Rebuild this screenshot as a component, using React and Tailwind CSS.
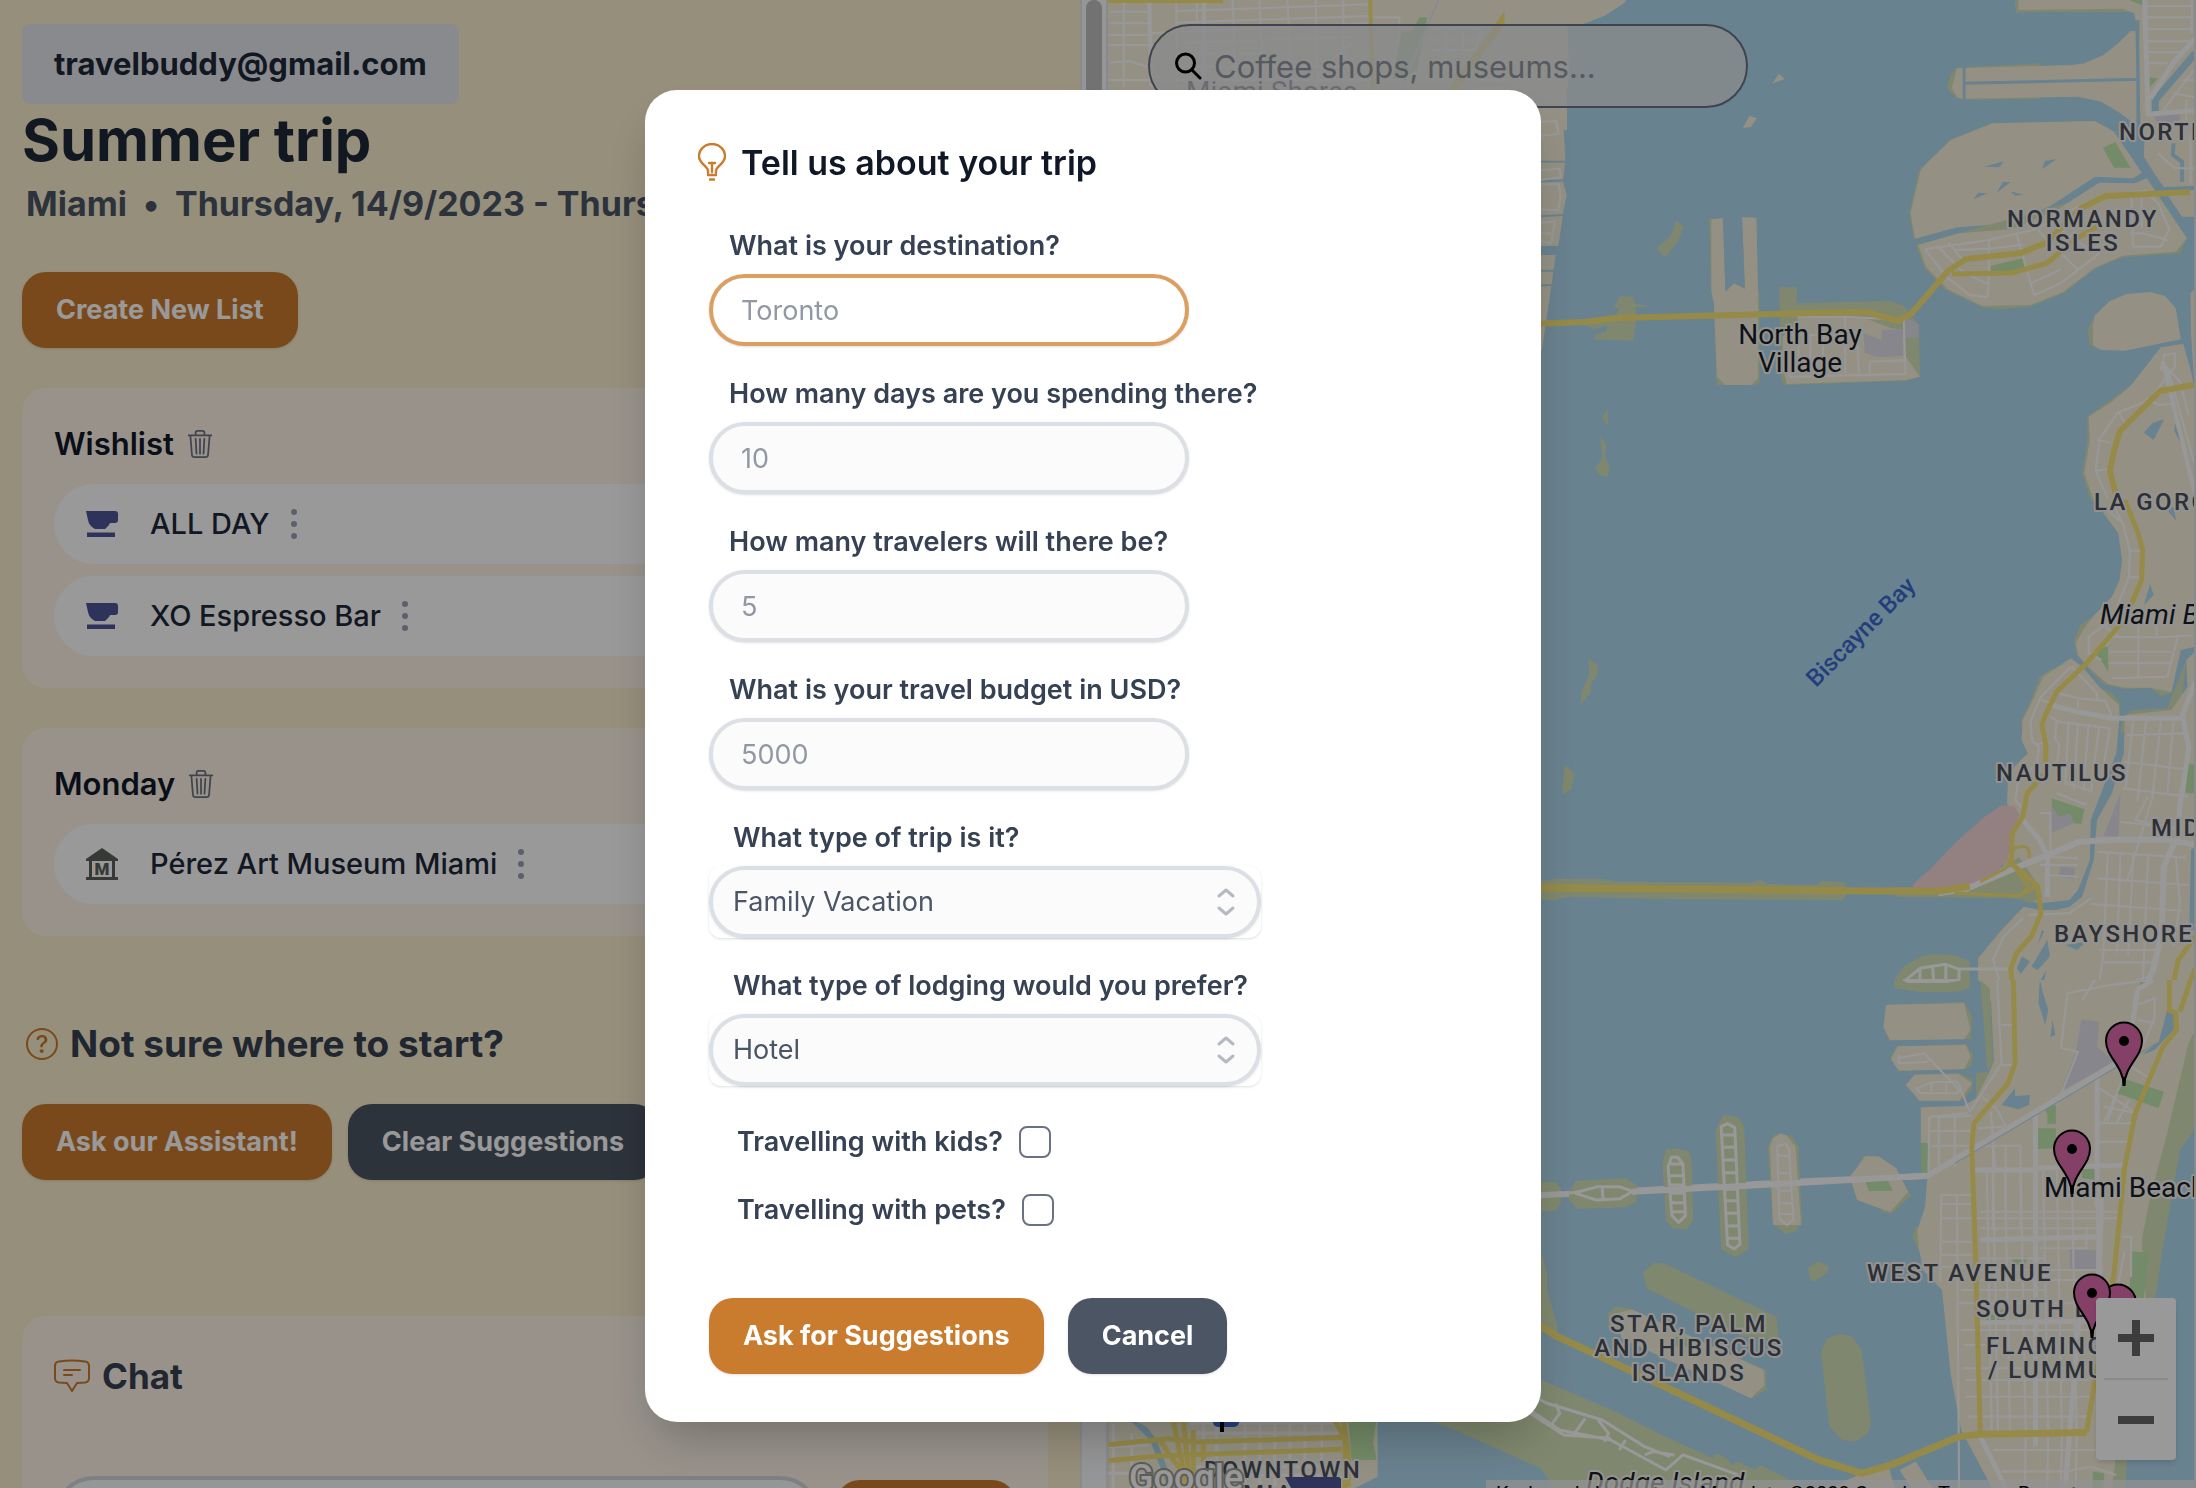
import React from "react";
import { BsTrash3, BsQuestionCircle } from "react-icons/bs";

const FONT = "font-['Inter','Liberation_Sans',sans-serif]";

function CupIcon() {
  return (
    <svg viewBox="0 0 32 28" className="h-7 w-8 shrink-0 fill-[#4b5596]" aria-hidden="true">
      <path d="M0 1h29q3 0 3 3v6q0 3-3 3h-4q-2 0-2 2l-4 4H9q-6-3-7-9z" />
      <path d="M1 22.500h28v4.500H1z" />
    </svg>
  );
}

function MuseumIcon() {
  return (
    <svg viewBox="0 0 32 32" className="h-8 w-8 shrink-0" aria-hidden="true">
      <path fill="#5d605b" d="M16 0l16 11v2H0v-2z M0 29h32v3H0z M3 13h3v16H3z M26 13h3v16h-3z" />
      <text x="16" y="26.500" textAnchor="middle" fontFamily="Roboto, sans-serif" fontWeight="900" fontSize="17" fill="#5d605b">M</text>
    </svg>
  );
}

function BulbIcon() {
  return (
    <svg viewBox="0 0 30 38" className="h-[38px] w-[30px] shrink-0" fill="none" stroke="#c97b2e" strokeWidth="2.400" strokeLinecap="round" strokeLinejoin="round" aria-hidden="true">
      <path d="M11 30v-2c0-5-9-7-9-15a13 12 0 0 1 26 0c0 8-9 10-9 15v2" />
      <path d="M12 20h6M15 20v9M11 32h8M13 36.500h4" />
    </svg>
  );
}

function ChatIcon() {
  return (
    <svg viewBox="0 0 36 34" className="h-[34px] w-9 shrink-0" fill="none" stroke="#cb7b2d" strokeWidth="2" strokeLinecap="round" strokeLinejoin="round" aria-hidden="true">
      <path d="M5 2.500Q18 .5 31 2.500q4 .5 4 4.500v12q0 4-4 4.500l-8 .5-5 8-5-8-8-.5q-4-.5-4-4.500V7q0-4 4-4.500z" />
      <path d="M10 11h16M10 16h8" />
    </svg>
  );
}

function Place({ icon, name }) {
  return (
    <li className="flex h-20 items-center rounded-full bg-white pl-8">
      {icon}
      <span className="ml-8 text-[29px] font-medium text-gray-800">{name}</span>
      <button type="button" aria-label={"Options for " + name} className="ml-5">
        <svg viewBox="0 0 8 32" className="h-8 w-2 fill-gray-400" aria-hidden="true">
          <circle cx="4" cy="4" r="3" />
          <circle cx="4" cy="16" r="3" />
          <circle cx="4" cy="28" r="3" />
        </svg>
      </button>
    </li>
  );
}

function TripList({ title, children }) {
  return (
    <section className="mt-10 rounded-3xl bg-[#fdf4e8] px-8 pt-9 pb-8">
      <div className="flex h-10 items-center gap-3">
        <h2 className="text-[31px] font-semibold text-gray-900">{title}</h2>
        <button type="button" aria-label={"Delete " + title}>
          <BsTrash3 className="size-7 text-gray-500" />
        </button>
      </div>
      <ul className="mt-5 flex flex-col gap-3">{children}</ul>
    </section>
  );
}

const BTN = "h-[76px] whitespace-nowrap rounded-3xl px-[34px] text-[27px] font-bold text-white shadow-sm";

function Planner() {
  return (
    <div className="flex h-screen overflow-hidden bg-[#faeecd]">
      <div className="min-w-0 flex-1 pt-6 pr-8 pl-[22px]">
        <div className="flex h-20 w-fit items-center rounded-lg bg-gray-200 px-8 text-[31px] font-bold text-gray-800">
          travelbuddy@gmail.com
        </div>
        <h1 className="text-[58px] leading-[72px] font-bold text-gray-800">Summer trip</h1>
        <p className="mt-1 flex gap-4 pl-1 text-[34px] leading-12 font-bold whitespace-nowrap text-gray-600">
          <span>Miami</span>
          <span>•</span>
          <span>Thursday, 14/9/2023 - Thursday, 21/9/2023</span>
        </p>
        <button type="button" className={BTN + " mt-11 block bg-[#cb7b2d]"}>Create New List</button>
        <TripList title="Wishlist">
          <Place icon={<CupIcon />} name="ALL DAY" />
          <Place icon={<CupIcon />} name="XO Espresso Bar" />
        </TripList>
        <TripList title="Monday">
          <Place icon={<MuseumIcon />} name="Pérez Art Museum Miami" />
        </TripList>
        <div className="mt-21 flex h-12 items-center gap-3 pl-1">
          <BsQuestionCircle className="size-8 text-[#cb7b2d]" />
          <h2 className="text-[37px] font-bold text-gray-700">Not sure where to start?</h2>
        </div>
        <div className="mt-9 flex gap-4">
          <button type="button" className={BTN + " bg-[#cb7b2d]"}>Ask our Assistant!</button>
          <button type="button" className={BTN + " bg-[#4b5563]"}>Clear Suggestions</button>
        </div>
        <section className="mt-34 h-80 rounded-3xl bg-[#fdf4e8] px-8 pt-9">
          <div className="flex h-12 items-center gap-3">
            <ChatIcon />
            <h2 className="text-[35px] font-bold text-gray-700">Chat</h2>
          </div>
          <div className="mt-19 flex items-end gap-4">
            <input aria-label="Message" className="h-20 min-w-0 flex-1 rounded-full border-4 border-gray-300 bg-gray-50 px-8 text-[27px]" />
            <button type="button" aria-label="Send" className={BTN + " w-[180px] bg-[#cb7b2d]"} />
          </div>
        </section>
      </div>
      <div className="w-7 border-x-2 border-gray-200 bg-gray-50 px-1" aria-hidden="true">
        <div className="h-[700px] rounded-full bg-[#bfbfbf]" />
      </div>
    </div>
  );
}

const WATER = "#b0d9ee";
const LAND = "#f7f2dc";
const OLIVE = "#d4e3b7";
const PARK = "#c0e8ad";
const BLOCK = "#dfe0ea";
const YELLOW = "#fae678";
const STREET = "#fdfdff";

function Area({ pts, fill = LAND }) {
  return <polygon points={pts} fill={fill} />;
}

function Line({ d, w = 3, c = STREET }) {
  return <path d={d} fill="none" stroke={c} strokeWidth={w} strokeLinejoin="round" vectorEffect="non-scaling-stroke" />;
}

function NorthLand() {
  return (
    <g transform="translate(1530 0) scale(.4248 .3333)">
      <Area pts="0,0 225,0 225,6 175,48 125,72 88,75 92,230 78,350 83,480 78,545 86,585 78,640 67,735 60,768 50,860 35,990 28,1050 -60,1050 -60,0" />
      <Line c={WATER} d="M0 485H90M0 545l90-4M0 650l90-6M0 812h80M0 857l80-3" w={2} />
      <Line c={WATER} d="M0 752l90-1" w={9} />
      <Line d="M26 365l36-2 5 38-41 6M26 510l44-4 2 26-46 8M26 553h42l4 40-6 38-40-3M26 668l32-4-8 65-24-5M26 700h24" w={2} />
      <Area pts="570,250 586,222 600,237" /><Area pts="501,384 517,347 534,355 520,381" />
      <Area fill={OLIVE} pts="345,662 363,680 345,730 318,772 298,745 330,710" />
      <Area fill={OLIVE} pts="183,1225 183,1280 171,1250" />
      <Area fill={OLIVE} pts="165,1305 180,1335 176,1370 187,1400 182,1432 160,1422 155,1405 171,1370" />
      <Area fill={OLIVE} pts="212,888 240,890 248,912 285,917 248,922 250,960 243,1022 150,1018 155,1003 180,995 182,975 150,988 132,975 135,955 200,948 212,925 197,922" />
      <Area fill={OLIVE} pts="422,658 454,655 540,880 541,1145 528,1155 440,1155 433,910 427,875" />
      <Area pts="427,658 454,655 460,875 480,850 506,866 499,652 533,653 537,880 537,1135 520,1155 460,1155 440,1130 433,910 427,875" />
      <Area fill={WATER} pts="454,650 499,650 506,866 480,850 460,875" />
      <Area fill={OLIVE} pts="587,862 628,862 628,910 850,903 880,918 915,975 918,1130 885,1142 600,1155 592,1140 588,960" />
      <Area pts="630,950 780,950 850,985 880,990 885,1070 918,1130 885,1140 605,1152 595,1100 595,1010 630,980" />
      <Area fill={BLOCK} pts="785,1000 828,1020 828,990 878,988 878,1068 820,1072 788,1060" />
      <Area fill={BLOCK} pts="882,950 915,972 915,1012 882,1015" />
      <Line d="M630 950h115l135 10 4 162-130 4-140 5-20-40M742 950v170M600 1005h180M632 1000v115M660 1000v115M690 1000v115M770 1000l4 120M800 1120v-35l82-4" w={2} />
      <Area fill={OLIVE} pts="1085,370 1325,363 1375,400 1430,518 1325,520 1130,670 1005,682 903,714 893,640 916,510 935,488 990,420" />
      <Area pts="1090,370 1330,363 1375,395 1440,518 1420,535 1330,530 1225,618 1130,670 1005,682 907,716 896,640 920,510 935,488 990,420" />
      <Area fill={WATER} pts="1068,500 1115,484 1105,502" /><Area fill={WATER} pts="1205,508 1212,483 1240,477" />
      <Area fill={WATER} pts="1098,578 1113,546 1132,546" /><Area fill={WATER} pts="1044,598 1055,578 1077,580" />
      <Area fill={WATER} pts="1130,574 1142,587 1163,584" />
      <Area fill={PARK} pts="1348,443 1378,427 1414,503 1375,503" />
      <Area fill={OLIVE} pts="909,735 1010,700 1400,560 1452,535 1546,715 1530,760 1395,772 1330,806 1255,880 1178,920 1105,928 1065,922 978,870 928,802" />
      <Area pts="914,735 1010,700 1130,688 1240,630 1340,548 1425,550 1452,535 1546,715 1520,755 1395,767 1330,803 1255,876 1178,915 1065,918 984,868 932,800" />
      <Area fill={PARK} pts="1085,797 1160,775 1165,810 1128,822 1085,812" />
      <Line d="M930 748l150-28 110-32 110-75 60-28 90-12 30 40 25 75-20 52h-65l-5-165M930 748l50 82 55 55 42 6 4-70M1080 720v130M985 728l35 55M1145 700l20 90 22 96 65-38 90-90M1195 690l95 120M1000 750l80-4 80-12M960 738l60 80 62 36M1180 850l70-42M1250 690l70 60M1412 700h30l60 20M1440 575v110" w={2} />
      <Area pts="1142,5 1150,0 1566,0 1566,650 1535,650 1495,575 1495,565 1480,540 1445,470 1447,415 1437,365 1432,95 1422,40 1395,28 1145,37" />
      <Area fill={OLIVE} pts="1142,5 1150,0 1150,30 1395,26 1410,36 1145,37" />
      <Area fill={PARK} pts="1410,0 1445,0 1445,18" />
      <Area fill={OLIVE} pts="1005,203 990,225 982,265 1005,295 1020,299 1200,297 1200,190" />
      <Area pts="1425,92 1413,94 1385,130 1350,165 1305,190 1278,195 1005,205 993,265 1007,293 1020,296 1290,290 1345,305 1390,340 1432,380" />
      <Line c={WATER} d="M1022 200v100M1022 250l412-12M1431 60v330" w={3} />
      <Area fill={PARK} pts="1455,232 1478,235 1457,265" />
      <Area fill={BLOCK} pts="1468,345 1530,342 1530,362 1500,378 1478,372" />
      <Line c={WATER} d="M1566 160L1472 300v45" w={7} />
      <Line c={WATER} d="M1495 567l71-3M1515 430l-2 35 22 20v60" w={4} />
      <Line d="M1447 0l8 343 111-12M1566 115l-50 70-55 110" w={5} />
      <Line d="M1450 18h108M1450 52h108M1450 88h108M1450 124h105M1450 157h80M1450 190h50M1558 0v100M1566 205l-75 125M1515 280l51 12M1566 240h-30M1478 460l40 45h48M1555 400v150M1545 300v60" w={2} />
      <Area pts="1320,1000 1330,945 1365,903 1405,882 1460,876 1495,888 1520,925 1532,1018 1400,1052 1345,1050 1320,1035" />
      <Area fill={OLIVE} pts="1325,955 1326,1035 1345,1052 1318,1035 1313,990" />
      <Area pts="1555,880 1566,865 1566,1200 1556,1000" />
      <Area fill={OLIVE} pts="1410,1160 1312,1250 1313,1320 1300,1420 1320,1500 1340,1500" />
      <Area pts="1485,1042 1538,1032 1557,1120 1566,1180 1566,1505 1328,1505 1305,1420 1318,1320 1315,1250 1370,1205 1412,1160" />
      <Area fill={WATER} pts="1445,1298 1465,1270 1493,1257 1468,1320" /><Area fill={WATER} pts="1518,1270 1537,1340 1517,1295" />
      <Line d="M1500 1100l66 300M1485 1110l8-45 25-5v40l-60 100-75 38-42 80-10 92 30 90M1385 1235l20 45M1335 1320l30 8M1332 1412l35-5M1490 1090l40 55 20 100M1450 1195l30 20 40-5" w={2} />
      <Line d="M1490 1085l76 400" w={4} />
    </g>
  );
}

function MidLand() {
  return (
    <g transform="translate(1530 500) scale(.4248 .3333)">
      <Area fill={OLIVE} pts="1325,350 1296,375 1281,420 1288,465 1310,500 1350,552 1400,567 1460,563 1485,587 1512,578" />
      <Area pts="1566,-5 1325,-5 1345,30 1385,100 1394,180 1388,240 1370,290 1325,350 1302,390 1285,430 1290,465 1312,498 1360,552 1400,563 1460,563 1510,577 1532,450 1566,440" />
      <Area fill={WATER} pts="1500,30 1515,20 1521,62" /><Area fill={WATER} pts="1460,252 1468,285 1445,315" />
      <Area fill={PARK} pts="1332,460 1360,435 1362,515" />
      <Area fill={OLIVE} pts="1230,505 1200,530 1178,605 1155,665 1172,740 1388,640 1390,610 1370,580" />
      <Area pts="1273,475 1300,500 1340,560 1386,615 1388,650 1380,760 1350,860 1320,960 1318,1080 1290,1170 1270,1200 1200,1210 1145,1195 1000,1185 1030,1150 1115,1100 1125,1050 1130,940 1123,910 1125,850 1140,800 1172,760 1157,720 1160,660 1182,605 1208,530" />
      <Area fill={OLIVE} pts="858,1160 1000,1165 1110,1115 1150,1070 1200,1160 1205,1190 1180,1210 1145,1195 860,1190" />
      <Area fill={OLIVE} pts="1545,480 1500,625 1420,630 1396,650 1390,700 1530,650" />
      <Area pts="1566,455 1545,480 1548,560 1510,630 1400,645 1398,760 1370,880 1335,960 1327,1080 1300,1190 1270,1220 1240,1230 1200,1230 1162,1220 1110,1290 1055,1375 1055,1440 1082,1475 1082,1505 1566,1505" />
      <Area fill={WATER} pts="1205,1290 1210,1295 1195,1335" /><Area fill={WATER} pts="1218,1320 1224,1370 1195,1410 1180,1400" />
      <Area fill={WATER} pts="1158,1370 1177,1385 1155,1422 1146,1405" /><Area fill={WATER} pts="1216,1410 1200,1500 1193,1460" />
      <Area fill={WATER} pts="1260,1335 1310,1325 1288,1350" /><Area fill={WATER} pts="1556,1050 1566,1040 1566,1290 1552,1290" />
      <Area fill={PARK} pts="1228,895 1305,928 1298,972 1280,970 1270,942 1245,950 1228,920" />
      <Area fill={BLOCK} pts="1228,918 1245,950 1270,942 1280,970 1228,998" />
      <Area fill={BLOCK} pts="1390,880 1385,1012 1350,1008" /><Area fill={BLOCK} pts="1248,1100 1283,1105 1280,1137 1245,1130" />
      <Area fill={PARK} pts="1550,790 1566,795 1566,880 1543,878" /><Area fill={PARK} pts="1434,1440 1460,1435 1436,1472" />
      <Area fill="#f5d5d5" pts="1110,916 1140,918 1153,945 1135,990 1125,1080 1095,1120 1035,1155 960,1168 900,1165 905,1148 940,1110 1000,1030 1070,950" />
      <Area fill={OLIVE} pts="26,1142 60,1137 170,1137 210,1145 525,1148 542,1138 560,1152 675,1155 690,1142 740,1148 745,1185 735,1200 350,1198 90,1190 60,1200 0,1198 0,1140" />
      <Area fill={OLIVE} pts="137,478 160,495 158,525 144,550 144,575 119,615 121,575 140,525" />
      <Area fill={OLIVE} pts="82,795 105,820 97,868 75,882" />
      <Area fill={OLIVE} pts="920,1370 950,1362 1000,1366 1035,1385 1035,1460 1012,1474 925,1477 858,1465 858,1440 880,1400" />
      <Line d="M883 1442l35-37 60-12 32 15v30l-30 8-62 1zM918 1405v40M948 1398l2 48M979 1394v50M1010 1407h115" w={3} />
      <Line d="M1350 20l45 50 17 80-2 80-40 130-55 50v50l30 20M1370 10l30 70M1370 410l60 2h60l70-6M1365 455h145M1362 490h145M1370 535l130-5 25-120M1432 380v150M1475 370v40M1412 152h25M1408 232h30M1345 370l40 40M1385 380l-30 60" w={2} />
      <Line d="M1205 600l35 15M1245 580l45 15 65 8 15 50M1275 500l60 80v20M1273 500l-70 90-25 75 5 60 15 15-5 50-45 60-5 50 15 25M1225 650l20 15 120 20M1240 665l-4 50 10 20-8 90M1268 665l-8 190M1290 668l-10 200M1315 672l-12 200M1340 678l-20 200M1365 685l-20 150M1290 600v25M1190 735l25-10M1240 880l70 35M1265 850l60 25M1200 940h25v120" w={2} />
      <Line d="M1420 665l-18 200M1450 665l-20 240M1485 665l-20 230-60 250M1515 665l-15 220M1398 785l140 22M1395 865l155 25M1405 705l140-5 5 50M1390 965l140 22M1335 1055l210 18M1335 1135l215 20M1320 1212l215 20M1360 1060l-10 300-15 130M1390 1060l-8 300M1420 1065l-12 300M1455 1065l-12 380M1340 1350h140M1345 1388h120M1520 1070l10 140-15 130M1455 890l-30 70 100 30M1200 1095h90M1210 1070l80 5M1215 1125l75 5M1260 1480l80-10 120-40" w={2} />
      <Line d="M1160 1255l-45 55-25 70 15 60 5 60M1105 1462h30M1175 1245l95-5 50-45" w={2} />
      <Line d="M1225 615l70 22 75 18h165M1566 545l-30 100 15 100-22 180-2 100" w={5} />
      <Line d="M960 1180l65-12 120-65 150-78 80-6h120l71 15M1520 1020l-28 80-5 200-20 110-35 90" w={6} />
      <Line d="M1160 960l40 60 18 50v120" w={5} />
      <Line c={YELLOW} w={7} d="M0 1163l750 9 210 2 75-15" />
      <Line c={YELLOW} w={3} d="M1000 1178l150 10 30-20 15-12M1060 1145l60-40 20-60q30-15 35 10v20M1133 1090l40 70-20 28M1145 1100l55 60" />
      <Line c={YELLOW} w={5} d="M1400 0l32 100 10 50-2 90-20 60-35 80-75 110-70 85-25 65-10 35 10 65-3 80-42 60-10 70-25 50-2 90 62 70 8 80-23 70-35 50-13 45 6 95M1566 1310l-40 70-20 120M1566 1405l-30 100" />
    </g>
  );
}

function SouthLand() {
  const avenues = [1075, 1090, 1118, 1155, 1208, 1240, 1275];
  return (
    <g transform="translate(1530 980) scale(.4248 .3333)">
      <Area fill={OLIVE} pts="858,0 1037,0 1035,24 1012,34 925,37 858,24" />
      <Line d="M880 0h130l-30 6h-90z" w={2} />
      <Area fill={OLIVE} pts="838,75 1022,66 1041,110 1037,178 1010,177 838,140" />
      <Area pts="845,74 1022,70 1037,150 1022,178 847,181 832,142 838,76" />
      <Area fill={OLIVE} pts="862,200 1026,192 1042,225 1040,255 1025,268 870,272 848,232" />
      <Area pts="866,199 1026,195 1037,230 1022,267 868,272 850,238" />
      <Area fill={OLIVE} pts="905,285 1008,279 1041,298 1041,325 1018,362 917,362 885,315" />
      <Area pts="905,284 1008,282 1041,310 1010,362 917,362 885,315" />
      <Area fill={OLIVE} pts="1060,0 1082,25 1090,250 1075,275 1050,280 1050,365 1080,330" />
      <Area fill={OLIVE} pts="910,735 900,770 920,825 970,930" />
      <Area pts="1060,0 1084,25 1092,245 1078,285 1050,355 1020,378 920,382 920,490 940,490 935,600 930,680 912,750 915,800 925,870 970,930 990,1180 1015,1350 1090,1530 1400,1530 1440,1100 1480,800 1566,400 1566,0" />
      <Area fill={OLIVE} pts="1566,150 1550,190 1500,460 1460,650 1440,780 1450,960 1400,1200 1370,1530 1400,1530 1475,960 1566,500" />
      <Area fill={WATER} pts="1566,440 1558,460 1530,510 1490,800 1475,930 1420,1200 1400,1530 1566,1530" />
      <Area fill={WATER} pts="1500,90 1520,95 1515,150 1470,210 1440,225 1480,185" />
      <Area fill={WATER} pts="1200,0 1208,40 1220,90 1213,135 1197,70" /><Area fill={WATER} pts="1230,120 1237,165 1225,172" />
      <Area fill={WATER} pts="1142,325 1142,348 1177,345 1175,375 1150,388 1110,375" />
      <Area fill={BLOCK} pts="1298,118 1340,125 1335,200 1378,245 1250,332 1285,215" />
      <Area fill={BLOCK} pts="1270,806 1337,812 1335,867 1272,867" />
      <Area fill={PARK} pts="1435,0 1460,0 1436,27" /><Area fill={PARK} pts="1395,295 1492,335 1480,385 1382,340" />
      <Area fill={PARK} pts="1195,445 1238,445 1238,505 1195,507" /><Area fill={PARK} pts="1210,380 1238,375 1238,432 1218,432 1218,405" />
      <Area fill={PARK} pts="920,487 938,493 938,580 922,580" /><Area fill={PARK} pts="1300,565 1334,567 1334,600 1300,595" />
      <Area fill={PARK} pts="1418,814 1457,818 1445,955 1410,950" /><Area fill={PARK} pts="1133,832 1172,830 1165,855 1140,855" />
      <Area fill={PARK} pts="1080,1010 1115,985 1118,1025 1070,1025" /><Area fill={PARK} pts="1325,1475 1352,1480 1350,1524 1325,1524" />
      <Line d="M940 410l-2 165M962 412v160M1000 410v150M1085 395l10 170M940 410l90-10M945 497h210M940 453h110M1120 495v250M1155 495v250M1090 500v240M960 412l80-5" w={2} />
      <Line d="M968 645l-2 260M1005 645l5 880M968 645h70M970 672h70M970 715h420M970 785h70M968 825h70M970 860h70M1060 695h330M1060 745h280M1200 805h110v-60M1060 835h150M1060 870h290M1060 900h300M1015 930h200M1010 970h340M1015 1050h320M1020 1095h60M1020 1165h300M1025 1200h290M1025 1250h300M1030 1310h290M1090 1410h290M1110 1475h150l60-15 60 25" w={2} />
      {avenues.map((x) => (
        <Line key={x} d={"M" + x + " 560l12 800" + (x > 1150 ? "l-2 160" : "")} w={2} />
      ))}
      <Line d="M1100 0l10 250-75 145 M1110 135h35M1105 255h30M1065 350l35 40 20 50M1055 445l60-5M1265 40l-15 165M1265 40l100-25 100-15M1250 205l40 10-50 160M1330 0l-30 60M1335 320l70 60 20 20M1340 430h80M1340 485h75M1350 380l80 20M1350 430l45-130 20-40 50 40M1380 345l-20 80M1410 360l-30 70M1430 75l40-20v60l-30 90M1430 120l40 10M868 235l60-15 90 120 15 50M868 225v25l70-5M910 325l35-18 60-2 10 20-10 15h-85zM945 307v35M980 305v35M1395 770h20v120M1400 815l-15 95M1335 560v350" w={2} />
      <Line d="M1430 30l35-30M1430 30l-15 130M1190 400v1000M1335 280v400M1345 650l-5 260M1040 570h150M1195 565l210-10M1060 780l280-10M1060 1028l270-5M1300 900l-40 620M1060 1370l60 155" w={5} />
      <Line d="M1380 250L1185 400 935 588 660 603 230 633h-60M0 647l100-6M95 640l60-17 60 3 30 9-50 22-60 2zM170 625v35" w={6} />
      <Line c={WATER} d="M1475 190L1000 550" w={1} />
      <Area fill={OLIVE} pts="0,605 60,607 72,625 72,670 60,692 0,695" />
      <Line d="M0 648l75-6" w={6} />
      <Area fill={OLIVE} pts="108,603 225,595 252,615 250,665 225,682 110,686 92,660 92,635" />
      <Line d="M75 642l35-5 50-17h50l32 14-30 22-55 4-50-20M170 625l2 35" w={3} />
      <Area fill={OLIVE} pts="320,510 345,505 372,514 380,530 384,722 370,748 335,745 320,720 312,545" />
      <Area fill={OLIVE} pts="455,405 490,411 504,440 515,805 485,832 450,808 437,450" />
      <Area fill={OLIVE} pts="575,463 615,467 632,500 640,725 625,754 600,762 572,730 560,500" />
      <Area pts="565,500 572,475 590,460 605,468 625,500 638,735 572,735" />
      <Area fill={OLIVE} pts="785,528 825,530 898,645 852,700 830,695 755,600" />
      <Area pts="790,528 822,530 862,565 890,635 848,696 770,660 753,590" />
      <Area fill={PARK} pts="790,605 840,597 855,632 797,633" />
      <Line d="M325 560l8-28h15l12 20 6 155-16 20-16-20zM328 552h30M330 587h30M330 615h30M332 640h30M332 668h32M334 695h32M450 440l15-9 17 12 12 350-13 14-16-12zM452 465h30M452 502h32M455 540h30M455 578h32M457 628h32M458 662h32M460 700h32M462 738h32M462 775h32" w={3} />
      <Line d="M582 500l20-10 8 20 10 210-15 16-18-20zM585 527h25M587 580h25M587 632h28M588 670h28M590 702h28" w={2} />
      <Line d="M240 635l420-28 270-20" w={6} />
      <Area fill={OLIVE} pts="654,865 678,843 703,860 702,875 668,906 660,900" />
      <Area fill={OLIVE} pts="266,878 290,850 315,850 580,1010 585,1075 500,1070 275,925" />
      <Area fill={OLIVE} pts="200,980 230,985 555,1170 556,1230 520,1255 185,1045 185,1000" />
      <Area pts="205,1000 240,988 550,1170 552,1215 520,1255 215,1075" />
      <Area fill={PARK} pts="340,1070 372,1075 370,1100 345,1100" />
      <Area fill={OLIVE} pts="700,1075 730,1062 757,1068 780,1108 803,1330 795,1360 767,1385 735,1380 705,1340 685,1115" />
      <Area fill={OLIVE} pts="0,790 30,830 40,880 40,930 65,1040 60,1070 0,1030" />
      <Area fill={OLIVE} pts="-300,1060 0,1190 27,1200 200,1295 310,1365 430,1435 440,1420 465,1437 475,1455 490,1445 530,1470 540,1455 600,1492 650,1530 60,1530 26,1466 -165,1356 -300,1290" />
      <Area pts="780,1480 845,1465 860,1530 700,1530" /><Area pts="870,1470 908,1445 950,1530 900,1530" />
      <Line d="M-20 1230l60 40 130 50 100 80 60 30M0 1290l70 60 120 30 130 90 40-45 130 60M0 1300l80 65 110 10M60 1270l10 30-20 35M130 1315l-25 45M160 1320l25 40-10 25M225 1380l-15 30M270 1425l20-10 50 10" w={3} />
      <Line c={YELLOW} w={5} d="M1138 0l4 250-17 60-80 120-5 70 8 300 12 560M1310 1358l20-158 45-320 25-320 25-160 65-200 32-50-2-50-15-10V0M1555 0l-25 95" />
      <Line c={YELLOW} w={7} d="M0 1020l65 50 235 140 380 230 100 40 70-25 160-85 50-7 250-5" />
    </g>
  );
}

function CornerLand() {
  return (
    <>
      <g transform="translate(1080 0) scale(.4464 .3333)">
        <Area pts="60,0 1091,0 1091,390 60,390" />
        <Line d="M66 35h90M66 70h90M66 105h90M66 135h90M66 188l45-5 45 20M66 240h90M98 0v260M216 0v260M262 0v70M216 33l430-20M216 68l430-20M155 100l490-30M216 130l400-20M216 160h200M216 200h430M216 240h430M342 0l8 260M402 0l8 260M465 0l8 260M528 0l4 260M590 0v250M645 52h70v150M560 180l60-60M780 85h120M780 120h120M780 150h110M820 80v110M860 80v110M900 240h190M900 85l-20 100M1000 240v150" w={2} />
        <Line d="M155 0l5 260M278 0v260" w={4} />
        <Area fill={PARK} pts="760,52 778,52 755,210 700,240 720,95 745,92" />
        <Line c="#e6e6f0" d="M803 0l-85 270" w={2} />
        <Line c={YELLOW} d="M60 3h260M650 0l6 270" w={4} />
        <Line c={YELLOW} d="M980 0L835 270" w={8} />
      </g>
      <g transform="translate(1080 1410) scale(.3333)">
        <Area pts="85,0 893,0 893,200 825,234 85,234" />
        <Area fill={PARK} pts="805,20 890,20 880,100 890,150 815,150" />
        <Area fill={WATER} pts="140,20 200,50 230,90 260,170 300,234 265,234 240,170 210,90" />
        <Line d="M85 110l120-5M85 190h120M100 40v200M155 70v170M330 40h450M330 70h450M370 30v120M410 30v200M495 30v200M540 30v200M585 30v200M630 30v200M675 30v200M725 30v200M330 170h450M450 195h330" w={3} />
        <Line c={YELLOW} w={5} d="M85 104l180-18 90 10 440-14M85 152l150-14 550-20M235 85l70 100M280 30l40 204M310 30l20 204M340 60v170M370 95v60M765 30l30 60v150M790 30l15 100v100" />
        <Area fill={OLIVE} pts="1110,20 1400,20 1400,180 1160,75" />
      </g>
    </>
  );
}

function District({ x, y, children, anchor = "start" }) {
  return (
    <text x={x} y={y} textAnchor={anchor} className="fill-[#4d5157] stroke-[#f4f4f4] stroke-[4px] text-[24px] font-medium tracking-widest" style={{ paintOrder: "stroke" }} strokeLinejoin="round">
      {children}
    </text>
  );
}

function Town({ x, y, children, anchor = "start", italic }) {
  return (
    <text x={x} y={y} textAnchor={anchor} fontStyle={italic ? "italic" : "normal"} className="fill-[#1b1d20] stroke-[#f4f4f4] stroke-[4px] text-[28px]" style={{ paintOrder: "stroke" }} strokeLinejoin="round">
      {children}
    </text>
  );
}

function Pin({ x, y }) {
  return (
    <g transform={"translate(" + x + " " + y + ")"}>
      <path d="M0 45C-1 24-18 16-18 0a18 18.500 0 0 1 36 0C18 16 1 24 0 45z" fill="#de6bad" stroke="#000" strokeWidth="2" />
      <path d="M0 36v9" stroke="#000" strokeWidth="3" />
      <circle r="5" fill="#000" />
    </g>
  );
}

function MapView() {
  return (
    <div className="relative h-screen overflow-hidden border-r-2 border-gray-200 bg-[#b0d9ee]">
      <svg viewBox="1108 0 1086 1488" preserveAspectRatio="xMinYMin slice" className="h-full w-full font-['Roboto',sans-serif]" role="img" aria-label="Map of Miami Beach">
        <CornerLand />
        <NorthLand />
        <MidLand />
        <SouthLand />
        <path d="M1530 324l55-2 30-4 240-6 15 1 28 8 14-8 36-42 18-12 55-6 25-10 35-35 25-12 84-4" fill="none" stroke={YELLOW} strokeWidth="6" strokeLinejoin="round" />
        <path d="M1952 274l60-1 35-10 30-25 25-14" fill="none" stroke={YELLOW} strokeWidth="5" strokeLinejoin="round" />
        <path d="M2194 385l-34 6-40 40-6 20-4 20 6 24" fill="none" stroke={YELLOW} strokeWidth="6" strokeLinejoin="round" />
        <Town x={1186} y={101}>Miami Shores</Town>
        <District x={2119} y={140}>NORTH BEACH</District>
        <District x={2083} y={227} anchor="middle">NORMANDY</District>
        <District x={2083} y={251} anchor="middle">ISLES</District>
        <Town x={1800} y={344} anchor="middle">North Bay</Town>
        <Town x={1800} y={372} anchor="middle">Village</Town>
        <District x={2094} y={510}>LA GORCE</District>
        <Town x={2100} y={624} italic>Miami Beach</Town>
        <text transform="translate(1816 688) rotate(-45)" className="fill-[#3a69cf] text-[24px] font-medium">Biscayne Bay</text>
        <District x={1996} y={781}>NAUTILUS</District>
        <District x={2151} y={836}>MID BEACH</District>
        <District x={2054} y={942}>BAYSHORE</District>
        <Town x={2044} y={1197}>Miami Beach</Town>
        <District x={1867} y={1281}>WEST AVENUE</District>
        <District x={1976} y={1317}>SOUTH BEACH</District>
        <District x={1986} y={1354}>FLAMINGO</District>
        <District x={1988} y={1378}>/ LUMMUS</District>
        <District x={1689} y={1332} anchor="middle">STAR, PALM</District>
        <District x={1689} y={1356} anchor="middle">AND HIBISCUS</District>
        <District x={1689} y={1381} anchor="middle">ISLANDS</District>
        <District x={1204} y={1478}>DOWNTOWN</District>
        <District x={1243} y={1502}>MIAMI</District>
        <Town x={1586} y={1492} italic>Dodge Island</Town>
        <rect x="1213" y="1400" width="26" height="27" rx="5" fill="#3a6fe0" />
        <path d="M1222 1416v16" stroke="#000" strokeWidth="4" />
        <path d="M1285 1477h54l2 2v9h-50z" fill="#4b5596" />
        <text x="1129" y="1490" className="fill-white stroke-[#9a9a94] stroke-[4px] text-[36px] font-medium" style={{ paintOrder: "stroke" }}>Google</text>
        <Pin x={2124} y={1041} />
        <Pin x={2072} y={1149} />
        <Pin x={2118} y={1303} />
        <Pin x={2092} y={1293} />
        <rect x="1486" y="1480" width="710" height="28" fill="#f5f5f5" fillOpacity=".7" />
        <g className="fill-black text-[20px]">
          <text x="1496" y="1501">Keyboard shortcuts</text>
          <text x="1700" y="1501">Map data ©2023 Google</text>
          <text x="1938" y="1501">Terms</text>
          <text x="2018" y="1501">Report a map error</text>
        </g>
      </svg>
      <label className="absolute top-6 left-10 flex h-[84px] w-[600px] items-center rounded-full border-2 border-gray-500 bg-gray-200/75 pl-6">
        <svg viewBox="0 0 28 30" className="h-[30px] w-7 shrink-0" fill="none" stroke="#000" strokeWidth="3" strokeLinecap="round" aria-hidden="true">
          <circle cx="11.500" cy="12" r="9" />
          <path d="M18 19l8 8" />
        </svg>
        <input type="text" aria-label="Search places" placeholder="Coffee shops, museums..." className="ml-3 h-full min-w-0 flex-1 bg-transparent text-[31px] outline-none placeholder:text-[#8f949e]" />
      </label>
      <div className="absolute right-[18px] bottom-7 w-20 rounded bg-white px-2 shadow-md">
        <button type="button" aria-label="Zoom in" className="flex h-[82px] w-full items-center justify-center border-b-2 border-gray-200">
          <svg viewBox="0 0 36 36" className="size-9 fill-[#666]" aria-hidden="true"><path d="M14 0h8v14h14v8H22v14h-8V22H0v-8h14z" /></svg>
        </button>
        <button type="button" aria-label="Zoom out" className="flex h-20 w-full items-center justify-center">
          <svg viewBox="0 0 36 36" className="size-9 fill-[#666]" aria-hidden="true"><path d="M0 14h36v8H0z" /></svg>
        </button>
      </div>
    </div>
  );
}

const LABEL = "text-[27px] leading-10 font-semibold whitespace-nowrap text-gray-700";

function TextField({ id, label, placeholder, active }) {
  return (
    <div>
      <label htmlFor={id} className={LABEL + " block pl-5"}>{label}</label>
      <input
        id={id}
        type="text"
        placeholder={placeholder}
        className={
          "mt-2 block h-[72px] w-[480px] rounded-full border-4 px-7 text-[27px] text-gray-600 shadow-sm outline-none placeholder:text-[#9298a3] " +
          (active ? "border-[#db9f61] bg-white" : "border-[#dce0e4] bg-[#fbfbfc]")
        }
      />
    </div>
  );
}

function SelectField({ id, label, options }) {
  return (
    <div>
      <label htmlFor={id} className={LABEL + " block pl-6"}>{label}</label>
      <div className="relative mt-2 w-[552px] rounded-xl shadow-sm">
        <select id={id} className="block h-[72px] w-full appearance-none rounded-full border-4 border-[#dce0e4] bg-[#fbfbfc] px-5 text-[27px] text-gray-600 shadow-sm outline-none">
          {options.map((o) => <option key={o}>{o}</option>)}
        </select>
        <svg viewBox="0 0 20 32" className="pointer-events-none absolute top-5 right-[25px] h-8 w-5" fill="none" stroke="#b4b9c3" strokeWidth="3" strokeLinecap="round" strokeLinejoin="round" aria-hidden="true">
          <path d="M3 10l7-6 7 6M3 22l7 6 7-6" />
        </svg>
      </div>
    </div>
  );
}

function CheckField({ id, label }) {
  return (
    <div className="flex h-10 items-center gap-4 pl-7">
      <label htmlFor={id} className={LABEL}>{label}</label>
      <input id={id} type="checkbox" className="size-8 appearance-none rounded-lg border-2 border-gray-500 bg-white" />
    </div>
  );
}

function TripDialog() {
  return (
    <div className="fixed inset-0 flex items-start justify-center overflow-hidden bg-black/40 pt-[90px] pr-[10px]">
      <div role="dialog" aria-modal="true" aria-labelledby="dialog-title" className="w-full max-w-4xl rounded-[32px] bg-white px-13 py-12 shadow-2xl">
        <div className="flex h-12 items-center gap-3.5">
          <BulbIcon />
          <h2 id="dialog-title" className="text-[34px] font-semibold text-gray-900">Tell us about your trip</h2>
        </div>
        <form className="mt-10 pl-3">
          <div className="flex flex-col gap-7">
            <TextField id="destination" label="What is your destination?" placeholder="Toronto" active />
            <TextField id="days" label="How many days are you spending there?" placeholder="10" />
            <TextField id="travelers" label="How many travelers will there be?" placeholder="5" />
            <TextField id="budget" label="What is your travel budget in USD?" placeholder="5000" />
            <SelectField id="trip-type" label="What type of trip is it?" options={["Family Vacation", "Business", "Solo"]} />
            <SelectField id="lodging" label="What type of lodging would you prefer?" options={["Hotel", "Hostel", "Apartment"]} />
          </div>
          <div className="mt-9 flex flex-col gap-7">
            <CheckField id="kids" label="Travelling with kids?" />
            <CheckField id="pets" label="Travelling with pets?" />
          </div>
          <div className="mt-17 flex gap-6">
            <button type="button" className={BTN + " bg-[#c97b2e]"}>Ask for Suggestions</button>
            <button type="button" className={BTN + " bg-[#4b5563]"}>Cancel</button>
          </div>
        </form>
      </div>
    </div>
  );
}

export default function App() {
  return (
    <div className={"grid h-screen grid-cols-[1108fr_1088fr] overflow-hidden " + FONT}>
      <Planner />
      <MapView />
      <TripDialog />
    </div>
  );
}
